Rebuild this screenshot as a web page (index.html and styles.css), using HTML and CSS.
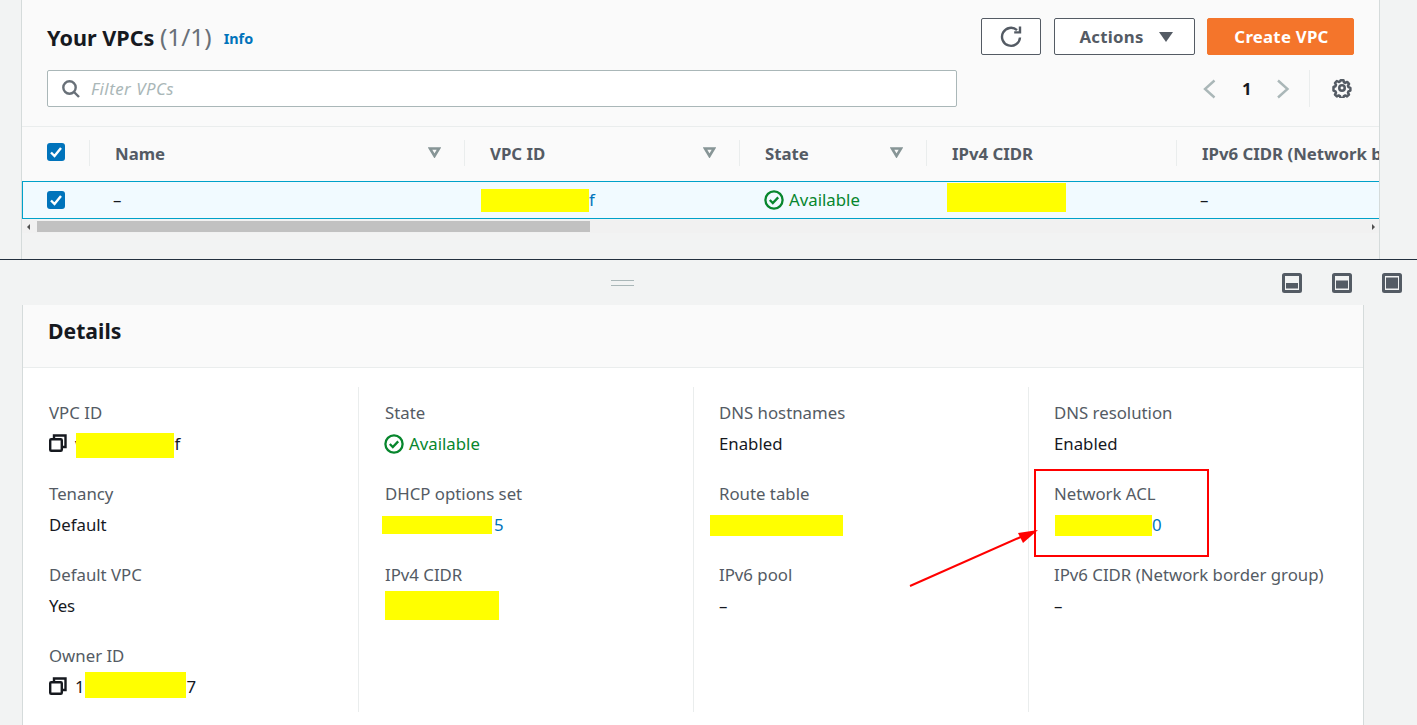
FILE: index.html
```html
<!DOCTYPE html>
<html lang="en">
  <head>
    <meta charset="UTF-8" />
    <meta name="viewport" content="width=device-width, initial-scale=1.0" />
    <title>Your VPCs</title>
    <link rel="stylesheet" href="styles.css">
  </head>
  <body>
    <section class="vpc-panel">
      <div class="toolbar">
        <div class="toolbar-top">
          <h1>Your VPCs <span class="count">(1/1)</span></h1>
          <a class="info-link">Info</a>
          <button class="btn btn-icon">
            <svg width="24" height="24" viewBox="0 0 24 24" fill="none" stroke="#545b64" stroke-width="2.4"><path d="M21 12.5a9 9 0 1 1-3-7.4"/><path d="M21 1.6v5.8h-5.8" stroke-linejoin="miter"/></svg>
          </button>
          <button class="btn btn-actions">Actions
            <svg width="14" height="10" viewBox="0 0 14 10"><path d="M0 0h14L7 10z" fill="#545b64"/></svg>
          </button>
          <button class="btn btn-primary">Create VPC</button>
        </div>
        <div class="toolbar-bottom">
          <div class="filter">
            <svg width="20" height="20" viewBox="0 0 20 20" fill="none" stroke="#687078" stroke-width="2.4"><circle cx="8.5" cy="8.5" r="6.2"/><path d="M13 13l5 5"/></svg>
            <span class="filter-text">Filter VPCs</span>
          </div>
          <div class="pager">
            <svg width="14" height="20" viewBox="0 0 14 20" fill="none" stroke="#aab7b8" stroke-width="2.4"><path d="M12.5 1.5L3 10l9.5 8.5"/></svg>
            <span class="page-num">1</span>
            <svg width="14" height="20" viewBox="0 0 14 20" fill="none" stroke="#aab7b8" stroke-width="2.4"><path d="M2 1.5l9.5 8.5L2 18.5"/></svg>
          </div>
          <div class="settings">
            <svg width="20" height="20" viewBox="0 0 22 22" fill="none" stroke="#545b64" stroke-linejoin="round"><circle cx="11" cy="11" r="3" stroke-width="2.8"/><path stroke-width="3" d="M9.3 1.6h3.4l.6 2.6 1.5.7 2.4-1.2 2.2 2.4-1.3 2.2.6 1.7 2.3.9v3.2l-2.3.9-.6 1.6 1.2 2.2-2.3 2.3-2.2-1.2-1.6.7-.7 2.4H9.3l-.7-2.4-1.5-.7-2.3 1.2-2.2-2.3 1.2-2.2-.7-1.6-2.3-.9V9.8l2.3-.9.7-1.7L2.6 5l2.2-2.4 2.3 1.2 1.5-.7z" transform="translate(.9 .9) scale(.92)"/></svg>
          </div>
        </div>
      </div>

      <div class="table-head">
        <div class="cell check-cell"><span class="checkbox"><svg width="18" height="18" viewBox="0 0 18 18" fill="none" stroke="#fff" stroke-width="2.4"><path d="M4 9.5l3.5 3.5L14 5"/></svg></span></div>
        <div class="cell">Name<svg class="sort" width="13" height="11" viewBox="0 0 13 11" fill="none" stroke="#879596" stroke-width="2.6"><path d="M2 1.5h9L6.5 9z"/></svg></div>
        <div class="cell">VPC ID<svg class="sort" width="13" height="11" viewBox="0 0 13 11" fill="none" stroke="#879596" stroke-width="2.6"><path d="M2 1.5h9L6.5 9z"/></svg></div>
        <div class="cell">State<svg class="sort" width="13" height="11" viewBox="0 0 13 11" fill="none" stroke="#879596" stroke-width="2.6"><path d="M2 1.5h9L6.5 9z"/></svg></div>
        <div class="cell">IPv4 CIDR</div>
        <div class="cell last">IPv6 CIDR (Network border group)</div>
      </div>
      <div class="table-row">
        <div class="cell check-cell"><span class="checkbox"><svg width="18" height="18" viewBox="0 0 18 18" fill="none" stroke="#fff" stroke-width="2.4"><path d="M4 9.5l3.5 3.5L14 5"/></svg></span></div>
        <div class="cell">–</div>
        <div class="cell link"><span class="mask mask-row-id"></span>f</div>
        <div class="cell status">
          <svg width="20" height="20" viewBox="0 0 20 20" fill="none" stroke="#07862d" stroke-width="2.3"><circle cx="10" cy="10" r="8.6"/><path d="M5.8 10l3 3 5.4-5.6"/></svg>Available
        </div>
        <div class="cell"><span class="mask mask-row-cidr"></span></div>
        <div class="cell">–</div>
      </div>
      <div class="scrollbar">
        <span class="arrow-left"></span>
        <span class="thumb"></span>
        <span class="arrow-right"></span>
      </div>
    </section>

    <div class="splitter">
      <span class="handle"></span>
      <div class="split-icons">
        <svg width="20" height="20" viewBox="0 0 20 20"><rect x="1.5" y="1.5" width="17" height="17" rx="1" fill="none" stroke="#545b64" stroke-width="3"/><rect x="4" y="10" width="12" height="5.5" fill="#545b64"/></svg>
        <svg width="20" height="20" viewBox="0 0 20 20"><rect x="1.5" y="1.5" width="17" height="17" rx="1" fill="none" stroke="#545b64" stroke-width="3"/><rect x="4" y="7.5" width="12" height="8" fill="#545b64"/></svg>
        <svg width="20" height="20" viewBox="0 0 20 20"><rect x="1.5" y="1.5" width="17" height="17" rx="1" fill="none" stroke="#545b64" stroke-width="3"/><rect x="4" y="4.5" width="12" height="11" fill="#545b64"/></svg>
      </div>
    </div>

    <section class="details">
      <div class="details-head"><h2>Details</h2></div>
      <div class="details-body">
        <div class="col shifted">
          <div class="field">
            <div class="label">VPC ID</div>
            <div class="value">
              <svg class="copy" width="18" height="18" viewBox="0 0 18 18" fill="none" stroke="#16191f" stroke-width="2.4"><rect x="1.2" y="5.2" width="11.6" height="11.6" rx="1"/><path d="M5 5V1.5h11.5V13H13"/></svg>
              v<span class="mask mask-vpc"></span>f
            </div>
          </div>
          <div class="field"><div class="label">Tenancy</div><div class="value">Default</div></div>
          <div class="field"><div class="label">Default VPC</div><div class="value">Yes</div></div>
          <div class="field">
            <div class="label">Owner ID</div>
            <div class="value">
              <svg class="copy" width="18" height="18" viewBox="0 0 18 18" fill="none" stroke="#16191f" stroke-width="2.4"><rect x="1.2" y="5.2" width="11.6" height="11.6" rx="1"/><path d="M5 5V1.5h11.5V13H13"/></svg>
              1<span class="mask mask-owner"></span>7
            </div>
          </div>
        </div>
        <div class="col shifted">
          <div class="field">
            <div class="label">State</div>
            <div class="value status">
              <svg width="20" height="20" viewBox="0 0 20 20" fill="none" stroke="#07862d" stroke-width="2.3"><circle cx="10" cy="10" r="8.6"/><path d="M5.8 10l3 3 5.4-5.6"/></svg>Available
            </div>
          </div>
          <div class="field"><div class="label">DHCP options set</div><div class="value link"><span class="mask mask-dhcp"></span>5</div></div>
          <div class="field"><div class="label">IPv4 CIDR</div><div class="value"><span class="mask mask-cidr"></span></div></div>
        </div>
        <div class="col">
          <div class="field"><div class="label">DNS hostnames</div><div class="value">Enabled</div></div>
          <div class="field"><div class="label">Route table</div><div class="value"><span class="mask mask-route"></span></div></div>
          <div class="field"><div class="label">IPv6 pool</div><div class="value">–</div></div>
        </div>
        <div class="col last">
          <div class="field"><div class="label">DNS resolution</div><div class="value">Enabled</div></div>
          <div class="field"><div class="label">Network ACL</div><div class="value link"><span class="mask mask-acl"></span>0</div></div>
          <div class="field"><div class="label">IPv6 CIDR (Network border group)</div><div class="value">–</div></div>
        </div>
      </div>
    </section>

    <!-- red annotation drawn on top of the screenshot -->
    <div class="note-box"></div>
    <svg class="note-arrow" width="140" height="70" viewBox="0 0 140 70"><path d="M2 62L115 12" stroke="#f00" stroke-width="2" fill="none"/><path d="M130 6L110 9l5 10z" fill="#f00"/></svg>
  </body>
</html>
```

FILE: styles.css
```css
* {
  box-sizing: border-box;
}
html,
body {
  height: 725px;
  overflow: hidden;
}
body {
  margin: 0;
  padding: 0;
  position: relative;
  background-color: #f2f3f3;
  font-family: "Noto Sans", sans-serif;
  font-size: 16.8px;
  line-height: 22px;
  color: #16191f;
}
h1,
h2 {
  margin: 0;
  font-weight: 700;
}

/* top panel */
.vpc-panel {
  height: 259px;
  margin-left: 21px;
  width: 1359px;
  border-left: 1px solid #d5dbdb;
  border-right: 1px solid #d5dbdb;
  overflow: hidden;
}
.toolbar {
  height: 127px;
  background-color: #fafafa;
  border-bottom: 1px solid #eaeded;
  padding: 18px 25px 0 25px;
}
.toolbar-top {
  display: flex;
  align-items: center;
  height: 37px;
}
h1 {
  font-size: 21.6px;
  line-height: 37px;
}
.count {
  font-size: 24.4px;
  font-weight: 400;
  color: #687078;
}
.info-link {
  margin-left: 12px;
  margin-top: 5px;
  font-size: 14.4px;
  font-weight: 700;
  color: #0073bb;
}
.btn {
  height: 37px;
  border: 1px solid #545b64;
  border-radius: 2px;
  background-color: #fff;
  color: #545b64;
  font-family: inherit;
  font-size: 16.8px;
  font-weight: 700;
  letter-spacing: 0.25px;
  display: flex;
  align-items: center;
  justify-content: center;
  padding: 0;
}
.btn-icon {
  width: 60px;
  margin-left: auto;
}
.btn-actions {
  width: 141px;
  margin-left: 13px;
  padding-left: 3px;
  gap: 15px;
}
.btn-primary {
  width: 147px;
  margin-left: 12px;
  padding-left: 2px;
  background-color: #f4752b;
  border-color: #f4752b;
  color: #fff;
}
.toolbar-bottom {
  display: flex;
  align-items: center;
  margin-top: 15px;
  height: 37px;
}
.filter {
  width: 910px;
  height: 37px;
  background-color: #fff;
  border: 1px solid #aab7b8;
  border-radius: 2px;
  display: flex;
  align-items: center;
  padding-left: 13px;
  gap: 10px;
}
.filter-text {
  font-style: italic;
  letter-spacing: 0.5px;
  color: #aab7b8;
}
.pager {
  display: flex;
  align-items: center;
  margin-left: 245px;
  width: 107px;
}
.page-num {
  font-weight: 700;
  margin: 0 24px 0 26px;
}
.settings {
  height: 37px;
  border-left: 1px solid #eaeded;
  padding-left: 22px;
  display: flex;
  align-items: center;
}
.settings svg {
  margin-top: -2px;
}

/* table */
.table-head,
.table-row {
  display: grid;
  grid-template-columns: 68px 375px 275px 187px 250px 1fr;
}
.table-head {
  height: 54px;
  background-color: #fafafa;
  font-weight: 700;
  color: #545b64;
}
.table-head .cell {
  height: 26px;
  margin-top: 13px;
  border-right: 1px solid #eaeded;
  padding-left: 25px;
  padding-right: 23px;
  padding-top: 2px;
  display: flex;
  align-items: center;
  justify-content: space-between;
  white-space: nowrap;
}
.table-head .cell.last {
  border-right: none;
  justify-content: flex-start;
}
.table-head .cell.check-cell,
.table-row .cell.check-cell {
  padding: 0 0 0 25px;
}
.sort {
  margin-top: -3px;
}
.checkbox {
  display: block;
  width: 18px;
  height: 18px;
  background-color: #0073bb;
  border-radius: 3px;
}
.table-head .checkbox {
  margin-top: -3px;
}
.table-row {
  height: 38px;
  background-color: #f1faff;
  border-top: 1px solid #00a1c9;
  border-bottom: 1px solid #00a1c9;
  box-shadow: inset 1px 0 0 #00a1c9;
  margin-bottom: 1px;
}
.table-row .cell {
  display: flex;
  align-items: center;
  padding-left: 23px;
  white-space: nowrap;
}
.table-row .cell.status {
  padding-left: 24px;
}
.scrollbar {
  height: 13px;
  background-color: #f1f1f1;
  display: flex;
  align-items: center;
}
.thumb {
  width: 553px;
  height: 11px;
  margin-left: 7px;
  background-color: #c1c1c1;
}
.arrow-left {
  margin-left: 5px;
  border: 3px solid transparent;
  border-right: 3px solid #505050;
  border-left: none;
  width: 3px;
}
.arrow-right {
  margin-left: auto;
  margin-right: 4px;
  border: 3px solid transparent;
  border-left: 3px solid #505050;
  border-right: none;
  width: 3px;
}

/* bits shared by table and details */
.link {
  color: #0073bb;
}
.status {
  color: #07862d;
  display: flex;
  align-items: center;
  gap: 5px;
}
.value.status {
  margin-left: -1px;
}
.mask {
  display: inline-block;
  background-color: #ff0;
  vertical-align: middle;
  flex: none;
}
.mask-row-id {
  width: 108px;
  height: 23px;
  margin-left: -7px;
}
.mask-row-cidr {
  width: 119px;
  height: 29px;
  margin-left: -3px;
  margin-top: -5px;
}
.mask-vpc {
  width: 98px;
  height: 25px;
  margin-left: -8px;
  margin-right: 1px;
  margin-top: 2px;
}
.mask-owner {
  width: 101px;
  height: 26px;
  margin-right: 1px;
  margin-top: -4px;
}
.mask-dhcp {
  width: 110px;
  height: 18px;
  margin-left: -3px;
  margin-right: 2px;
}
.mask-cidr {
  width: 114px;
  height: 29px;
  margin-top: -2px;
}
.mask-route {
  width: 133px;
  height: 21px;
  margin-left: -9px;
}
.mask-acl {
  width: 97px;
  height: 21px;
  margin-left: 1px;
}

/* splitter */
.splitter {
  height: 46px;
  border-top: 1px solid #232f3e;
  display: flex;
  align-items: center;
}
.handle {
  width: 23px;
  height: 6px;
  margin-left: 611px;
  border-top: 1px solid #aab7b8;
  border-bottom: 1px solid #aab7b8;
}
.split-icons {
  margin-left: auto;
  margin-right: 15px;
  display: flex;
  gap: 30px;
}

/* details panel */
.details {
  margin-left: 22px;
  width: 1342px;
  height: 420px;
  background-color: #fff;
  border-left: 1px solid #d5dbdb;
  border-right: 1px solid #d5dbdb;
}
.details-head {
  height: 63px;
  background-color: #fafafa;
  border-bottom: 1px solid #eaeded;
  padding: 11px 25px 0;
}
h2 {
  font-size: 21.2px;
  line-height: 30px;
}
.details-body {
  display: grid;
  grid-template-columns: 336px 335px 335px 1fr;
  padding-top: 19px;
}
.col {
  height: 325px;
  padding: 15px 0 0 25px;
  border-right: 1px solid #eaeded;
}
.col.shifted {
  padding-left: 26px;
}
.col.last {
  border-right: none;
}
.field {
  height: 81px;
}
.label {
  color: #545b64;
  margin-bottom: 9px;
  white-space: nowrap;
}
.value {
  height: 22px;
  display: flex;
  align-items: center;
  white-space: nowrap;
}
.copy {
  margin-right: 8px;
  margin-top: -3px;
  flex: none;
}

/* annotation */
.note-box {
  position: absolute;
  left: 1034px;
  top: 469px;
  width: 175px;
  height: 88px;
  border: 2px solid #f00;
}
.note-arrow {
  position: absolute;
  left: 908px;
  top: 524px;
}
```
